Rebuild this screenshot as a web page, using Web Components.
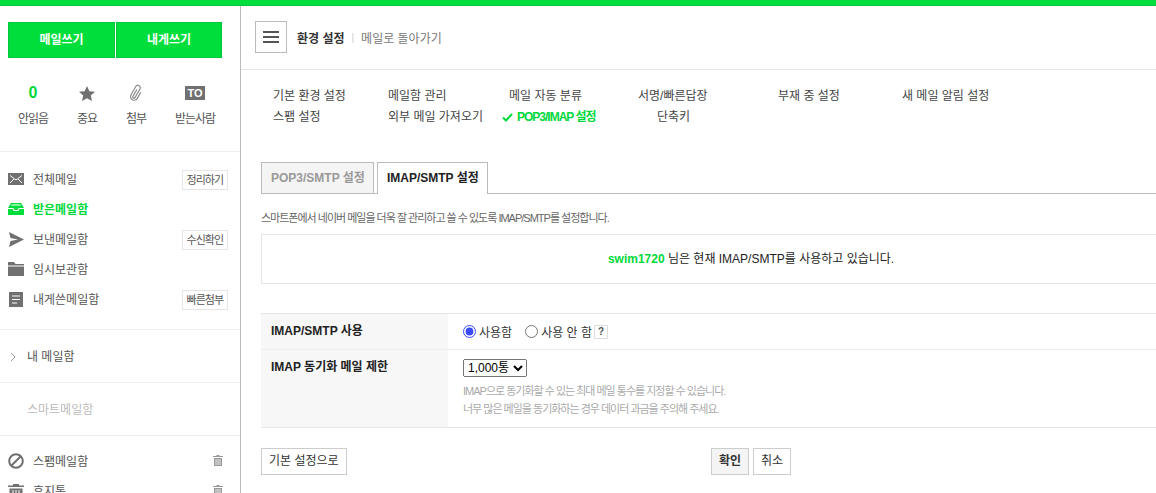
<!DOCTYPE html>
<html lang="ko">
<head>
<meta charset="utf-8">
<title>환경 설정</title>
<style>
  html, body { margin: 0; height: 493px; overflow: hidden; background: #fff; }
  body { font: 12px "Liberation Sans", "Noto Sans CJK KR", sans-serif; color: #333; }
</style>
</head>
<body>
<mail-app>
  <side-panel slot="side">
    <folder-row label="전체메일" icon="all" action="정리하기"></folder-row>
    <folder-row label="받은메일함" icon="inbox" active></folder-row>
    <folder-row label="보낸메일함" icon="sent" action="수신확인"></folder-row>
    <folder-row label="임시보관함" icon="draft"></folder-row>
    <folder-row label="내게쓴메일함" icon="self" action="빠른첨부"></folder-row>
  </side-panel>
  <settings-header slot="main"></settings-header>
  <settings-nav slot="main"></settings-nav>
  <imap-settings slot="main"></imap-settings>
</mail-app>

<script>
const ICONS = {
  all: '<svg width="16" height="12" viewBox="0 0 16 12"><rect width="16" height="12" fill="#707070"/><path d="M2 2.500l6 4.500 6-4.500M2 10l4-4M14 10l-4-4" fill="none" stroke="#fff"/></svg>',
  inbox: '<svg width="16" height="12" viewBox="0 0 16 12"><path d="M3 0h10l3 5v7H0V5z" fill="#00de3c"/><path d="M3.200 2h9.600M0 5.500h5l1 2h4l1-2h5" fill="none" stroke="#fff" stroke-width="1.200"/></svg>',
  sent: '<svg width="16" height="15" viewBox="0 0 16 15"><path d="M1 0l15 7.500L1 15l1.500-6L10 7.500 2.500 6z" fill="#707070"/></svg>',
  draft: '<svg width="16" height="14" viewBox="0 0 16 14"><path d="M0 0h6l1.500 2H16v1.500H0zM0 4.500h16V14H0z" fill="#707070"/></svg>',
  self: '<svg width="14" height="15" viewBox="0 0 14 15"><rect width="14" height="15" fill="#707070"/><path d="M3 4h8M3 7.500h8M3 11h5" stroke="#fff" stroke-width="1.200"/></svg>',
  spam: '<svg width="16" height="16" viewBox="0 0 16 16"><circle cx="8" cy="8" r="6.800" fill="none" stroke="#707070" stroke-width="2"/><path d="M3.500 12.500l9-9" stroke="#707070" stroke-width="2"/></svg>',
  trash: '<svg width="16" height="14" viewBox="0 0 16 14"><path d="M5 0h6v1.500h5V3H0V1.500h5zM1.500 4.500h13V14h-13z" fill="#707070"/><path d="M5 6v7M8 6v7M11 6v7" stroke="#fff"/></svg>'
};
const BIN = '<svg width="10" height="11" viewBox="0 0 10 11"><path d="M3.500 0h3v1H10v1H0V1h3.500zM1 3h8v8H1z" fill="#999"/><path d="M3 4v6M5 4v6M7 4v6" stroke="#fff" stroke-width=".8"/></svg>';

class MailApp extends HTMLElement {
  constructor() {
    super();
    this.attachShadow({ mode: 'open' }).innerHTML = `
      <style>
        :host { display: block; width: 1156px; height: 493px; overflow: hidden; }
        .top { height: 5px; background: #00de3c; border-bottom: 1px solid #00c73c; }
        .body { display: grid; grid-template-columns: 241px 1fr; height: 487px; }
        .side { border-right: 1px solid #bbb; overflow: hidden; }
        .main { overflow: hidden; }
      </style>
      <div class="top"></div>
      <div class="body">
        <div class="side"><slot name="side"></slot></div>
        <div class="main"><slot name="main"></slot></div>
      </div>`;
  }
}

class SidePanel extends HTMLElement {
  constructor() {
    super();
    const filters = [
      ['<b>0</b>', '안읽음'],
      ['<svg width="16" height="15" viewBox="0 0 16 15"><path d="M8 0l2.400 5.200 5.600.6-4.200 3.800L13 15 8 12.200 3 15l1.200-5.400L0 5.800l5.600-.6z" fill="#707070"/></svg>', '중요'],
      ['<svg width="16" height="18" viewBox="0 0 16 18"><path transform="rotate(30 8 9)" d="M7 5.500v8a1.200 1.200 0 0 0 2.400 0V3.500a2.400 2.400 0 0 0-4.800 0V13a3.600 3.600 0 0 0 7.200 0V6" fill="none" stroke="#8a8a8a" stroke-width="1.200"/></svg>', '첨부'],
      ['<span class="to">TO</span>', '받는사람']
    ].map(([icon, label]) => `<div class="filter"><div class="ico">${icon}</div><div class="name">${label}</div></div>`).join('');
    this.attachShadow({ mode: 'open' }).innerHTML = `
      <style>
        :host { display: block; }
        .compose { display: grid; grid-template-columns: 107px 106px; gap: 1px; padding: 16px 18px 0 8px; }
        .compose div { height: 36px; line-height: 34px; box-sizing: border-box; text-align: center; background: #00de3c; border: 1px solid #00c73c; color: #fff; font-weight: 700; }
        .filters { display: grid; grid-template-columns: 54px 54px 44px 74px; justify-content: start; padding: 23px 0 0 6px; height: 70px; border-bottom: 1px solid #eee; color: #555; text-align: center; }
        .ico { height: 24px; display: flex; align-items: center; justify-content: center; margin-bottom: 4px; }
        .name { letter-spacing: -1px; }
        .ico b { color: #00d93c; font-size: 16px; }
        .to { background: #707070; color: #fff; font-weight: 700; font-size: 11px; width: 20px; height: 14px; line-height: 14px; }
        .list { padding: 12px 0 15px; border-bottom: 1px solid #eee; }
        .mine { height: 52px; line-height: 55px; border-bottom: 1px solid #eee; padding-left: 27px; position: relative; color: #555; }
        .chev { position: absolute; left: 10px; top: 22px; }
        .smart { height: 52px; line-height: 55px; border-bottom: 1px solid #eee; padding-left: 27px; color: #bbb; }
        .trash { padding-top: 10px; }
      </style>
      <div class="compose"><div>메일쓰기</div><div>내게쓰기</div></div>
      <div class="filters">${filters}</div>
      <div class="list"><slot></slot></div>
      <div class="mine"><svg class="chev" width="7" height="10" viewBox="0 0 7 10"><path d="M1 1l4 4-4 4" fill="none" stroke="#999"/></svg>내 메일함</div>
      <div class="smart">스마트메일함</div>
      <div class="trash">
        <folder-row label="스팸메일함" icon="spam" bin></folder-row>
        <folder-row label="휴지통" icon="trash" bin></folder-row>
      </div>`;
  }
}

class FolderRow extends HTMLElement {
  constructor() {
    super();
    this.attachShadow({ mode: 'open' });
  }
  connectedCallback() {
    const action = this.getAttribute('action');
    const bin = this.hasAttribute('bin');
    this.shadowRoot.innerHTML = `
      <style>
        :host { display: flex; align-items: center; height: 30px; padding: 0 12px 0 8px; color: #555; }
        :host([active]) { color: #00d93c; font-weight: 700; }
        .icon { display: flex; align-items: center; justify-content: center; width: 16px; margin-right: 9px; }
        .label { flex: 1; padding-bottom: 2px; }
        .action { border: 1px solid #e5e5e5; height: 18px; line-height: 18px; margin-top: 2px; padding: 0 4px; font-size: 11px; letter-spacing: -1px; color: #555; font-weight: 400; }
        .bin { margin-right: 5px; display: flex; margin-bottom: 2px; }
      </style>
      <span class="icon">${ICONS[this.getAttribute('icon')]}</span>
      <span class="label">${this.getAttribute('label')}</span>
      ${action ? `<span class="action">${action}</span>` : ''}
      ${bin ? `<span class="bin">${BIN}</span>` : ''}`;
  }
}

class SettingsHeader extends HTMLElement {
  constructor() {
    super();
    this.attachShadow({ mode: 'open' }).innerHTML = `
      <style>
        :host { display: flex; align-items: center; height: 64px; box-sizing: border-box; border-bottom: 1px solid #e5e5e5; padding: 0 0 1px 14px; }
        .menu { width: 30px; height: 30px; border: 1px solid #bbb; display: flex; flex-direction: column; justify-content: center; gap: 3px; align-items: center; margin: 0 10px 0 0; }
        .menu i { display: block; width: 16px; height: 2px; background: #555; }
        b { color: #333; }
        .sep { color: #ccc; margin: 0 7px; font-size: 10px; }
        .back { color: #777; }
      </style>
      <div class="menu"><i></i><i></i><i></i></div>
      <b>환경 설정</b><span class="sep">|</span><span class="back">메일로 돌아가기</span>`;
  }
}

class SettingsNav extends HTMLElement {
  constructor() {
    super();
    this.attachShadow({ mode: 'open' }).innerHTML = `
      <style>
        :host { display: grid; grid-template-columns: 115px 113px 95px 42px 69px 71px 124px auto; grid-auto-rows: 21px; line-height: 21px; padding: 16px 0 0 32px; height: 76px; box-sizing: border-box; color: #444; white-space: nowrap; }
        .c { text-align: center; }
        .auto { text-align: center; padding-right: 6px; }
        .key { padding-left: 2px; }
        .on { color: #00d93c; font-weight: 700; letter-spacing: -1px; display: flex; align-items: center; padding-left: 1px; }
        .on svg { margin-right: 4px; flex: none; }
      </style>
      <span>기본 환경 설정</span><span>메일함 관리</span><span class="auto">메일 자동 분류</span><span></span><span>서명/빠른답장</span><span></span><span>부재 중 설정</span><span>새 메일 알림 설정</span>
      <span>스팸 설정</span><span>외부 메일 가져오기</span><span class="on"><svg width="11" height="9" viewBox="0 0 11 9"><path d="M1 4.500l3 3L10 1" fill="none" stroke="#00d93c" stroke-width="2"/></svg>POP3/IMAP 설정</span><span></span><span class="c key">단축키</span>`;
  }
}

class ImapSettings extends HTMLElement {
  constructor() {
    super();
    this.attachShadow({ mode: 'open' }).innerHTML = `
      <style>
        :host { display: block; width: 980px; padding: 16px 0 0 20px; color: #333; }
        .tabs { display: flex; gap: 3px; border-bottom: 1px solid #bbb; height: 31px; }
        .tab { padding: 0 8px 0 9px; height: 31px; line-height: 30px; border: 1px solid #bbb; border-bottom: 0; box-sizing: border-box; font-weight: 700; }
        .off { background: #f4f4f4; color: #999; }
        .cur { background: #fff; color: #222; height: 32px; position: relative; z-index: 1; }
        .desc { margin: 17px 0 0; height: 23px; line-height: 14px; font-size: 11px; color: #666; letter-spacing: -1px; }
        .notice { height: 50px; line-height: 48px; box-sizing: border-box; border: 1px solid #e5e5e5; text-align: center; color: #222; }
        .notice b { color: #00d93c; }
        .form { margin-top: 29px; border-top: 1px solid #e5e5e5; border-bottom: 1px solid #e5e5e5; display: grid; grid-template-columns: 187px 1fr; }
        .th { background: #f7f7f7; padding: 7px 0 0 10px; font-weight: 700; color: #222; box-sizing: border-box; }
        .td { padding-left: 15px; box-sizing: border-box; }
        .r1 { height: 36px; border-bottom: 1px solid #eee; }
        .td.r1 { display: flex; align-items: center; color: #333; }
        input { margin: 0 3px 0 0; width: 13px; height: 13px; accent-color: #3b4bff; }
        label { display: inline-flex; align-items: center; margin-right: 13px; }
        .q { display: inline-block; width: 12px; height: 12px; line-height: 12px; border: 1px solid #ddd; border-radius: 1px; text-align: center; font-size: 10px; font-weight: 700; color: #555; margin-left: -11px; }
        .r2 { height: 77px; }
        select { margin-top: 9px; font: 12px "Liberation Sans", "Noto Sans CJK KR", sans-serif; display: block; height: 18px; width: 64px; padding: 0; }
        .hint { margin-top: 5px; font-size: 11px; line-height: 18px; color: #aaa; letter-spacing: -1px; }
        .btns { position: relative; display: flex; justify-content: center; gap: 4px; margin-top: 20px; }
        .btn { height: 27px; line-height: 25px; box-sizing: border-box; border: 1px solid #ccc; padding: 0 7px; color: #333; background: #fff; }
        .ok { background: #f4f4f4; font-weight: 700; }
        .reset { position: absolute; left: 0; top: 0; }
      </style>
      <div class="tabs"><div class="tab off">POP3/SMTP 설정</div><div class="tab cur">IMAP/SMTP 설정</div></div>
      <p class="desc">스마트폰에서 네이버 메일을 더욱 잘 관리하고 쓸 수 있도록 IMAP/SMTP를 설정합니다.</p>
      <div class="notice"><b>swim1720</b> 님은 현재 IMAP/SMTP를 사용하고 있습니다.</div>
      <div class="form">
        <div class="th r1">IMAP/SMTP 사용</div>
        <div class="td r1">
          <label><input type="radio" name="use" checked>사용함</label>
          <label><input type="radio" name="use">사용 안 함</label>
          <span class="q">?</span>
        </div>
        <div class="th r2">IMAP 동기화 메일 제한</div>
        <div class="td r2">
          <select><option>1,000통</option></select>
          <div class="hint">IMAP으로 동기화할 수 있는 최대 메일 통수를 지정할 수 있습니다.<br>너무 많은 메일을 동기화하는 경우 데이터 과금을 주의해 주세요.</div>
        </div>
      </div>
      <div class="btns">
        <span class="btn reset">기본 설정으로</span>
        <span class="btn ok">확인</span><span class="btn">취소</span>
      </div>`;
  }
}

customElements.define('folder-row', FolderRow);
customElements.define('side-panel', SidePanel);
customElements.define('mail-app', MailApp);
customElements.define('settings-header', SettingsHeader);
customElements.define('settings-nav', SettingsNav);
customElements.define('imap-settings', ImapSettings);
</script>
</body>
</html>
